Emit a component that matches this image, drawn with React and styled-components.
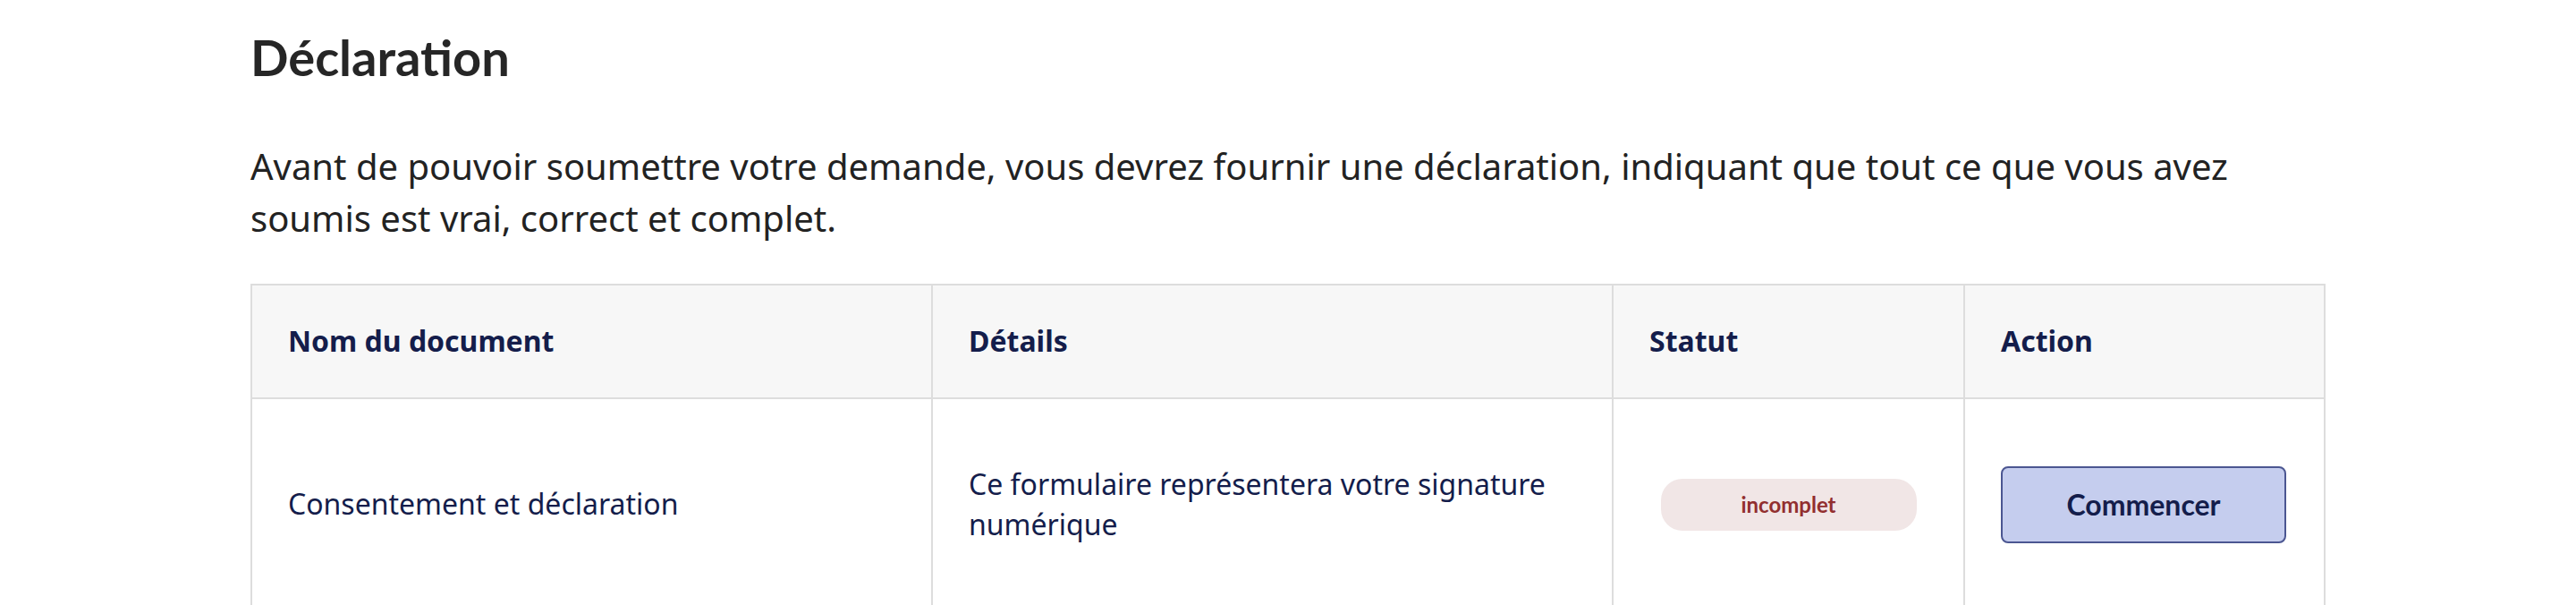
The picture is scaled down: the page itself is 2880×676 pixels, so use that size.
import React from 'react'
import styled, { createGlobalStyle } from 'styled-components'

const GlobalStyle = createGlobalStyle`
  html, body {
    margin: 0;
    padding: 0;
    background: #fff;
  }
  body {
    font-family: 'Noto Sans', 'Open Sans', sans-serif;
    color: #242424;
  }
`

const Page = styled.div`
  width: 2320px;
  margin: 0 auto;
  padding-top: 30px;
`

const Title = styled.h2`
  margin: 0;
  font-family: Lato, 'Noto Sans', sans-serif;
  font-weight: 700;
  font-size: 56px;
  line-height: 1.2;
  color: #262626;
`

const Intro = styled.p`
  margin: 60px 0 44px;
  font-size: 40px;
  line-height: 58px;
  color: #222;
  max-width: 2240px;
`

const Table = styled.table`
  width: 100%;
  border-collapse: collapse;
  table-layout: fixed;
`

const Head = styled.th`
  box-sizing: border-box;
  width: ${p => p.$w || 'auto'};
  background: #f7f7f7;
  border: 2px solid #dddddd;
  padding: 40px 40px;
  text-align: left;
  font-size: 32px;
  line-height: 1.4;
  font-weight: 700;
  color: #141d4b;
`

const Cell = styled.td`
  border: 2px solid #dddddd;
  border-top: none;
  padding: 73px 40px;
  vertical-align: middle;
  font-size: 32px;
  line-height: 1.4;
  color: #141d4b;
`

const Badge = styled.span`
  display: block;
  width: 286px;
  margin: 0 auto;
  padding: 12px 0;
  border-radius: 24px;
  background: #f1e6e6;
  color: #922f2f;
  font-family: Lato, 'Noto Sans', sans-serif;
  font-weight: 700;
  font-size: 24px;
  line-height: 34px;
  text-align: center;
`

const Button = styled.button`
  display: block;
  width: 319px;
  height: 86px;
  margin: 0;
  border: 2px solid #4b5691;
  border-radius: 8px;
  background: #c5cdee;
  color: #141d4b;
  font-family: Lato, 'Noto Sans', sans-serif;
  font-weight: 700;
  font-size: 32px;
  cursor: pointer;
`

export default function App() {
  return (
    <Page>
      <GlobalStyle />
      <Title>Déclaration</Title>
      <Intro>
        Avant de pouvoir soumettre votre demande, vous devrez fournir une déclaration, indiquant que tout ce que vous avez soumis est vrai, correct et complet.
      </Intro>
      <Table>
        <thead>
          <tr>
            <Head $w="761px">Nom du document</Head>
            <Head $w="761px">Détails</Head>
            <Head $w="393px">Statut</Head>
            <Head>Action</Head>
          </tr>
        </thead>
        <tbody>
          <tr>
            <Cell>Consentement et déclaration</Cell>
            <Cell>Ce formulaire représentera votre signature numérique</Cell>
            <Cell>
              <Badge>incomplet</Badge>
            </Cell>
            <Cell>
              <Button>Commencer</Button>
            </Cell>
          </tr>
        </tbody>
      </Table>
    </Page>
  )
}
